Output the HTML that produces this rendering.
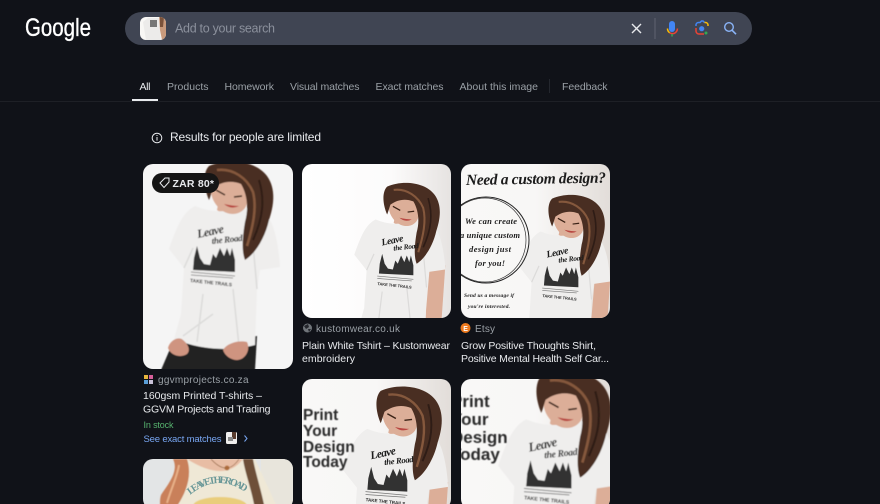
<!DOCTYPE html>
<html lang="en"><head><meta charset="utf-8"><title>Google Lens results</title>
<style>
html,body{margin:0;padding:0;background:#101218;width:880px;height:504px;overflow:hidden}
svg{display:block;font-family:"Liberation Sans",sans-serif}
.tab{font-size:10.5px;fill:#9aa0a6}
.src{font-size:10px;fill:#9aa0a6}
.ttl{font-size:10.5px;fill:#e8eaed}
.h{fill:#4a2f22}.s{fill:#efeeed}.k{fill:#dcae98}.g{fill:#333}.f{fill:none;stroke:#dcdbda;stroke-width:1.500}
.l{fill:none;stroke:#85583c;stroke-width:2.500}.d{fill:none;stroke:#2e1c14;stroke-width:2}
.sc{font-family:"Liberation Serif",serif;font-style:italic;font-weight:bold;fill:#1c1c1c}
.pr{font-weight:bold;fill:#2a2a2a}
</style></head><body>
<svg width="880" height="504" viewBox="0 0 880 504" xmlns="http://www.w3.org/2000/svg">
<defs>
<clipPath id="c1"><rect width="150" height="205" rx="10"/></clipPath>
<clipPath id="c2"><rect width="149" height="154" rx="10"/></clipPath>
<clipPath id="c4"><rect width="149" height="130" rx="10"/></clipPath>
<clipPath id="c6"><rect width="150" height="50" rx="10"/></clipPath>
<clipPath id="th"><rect width="26" height="23" rx="6"/></clipPath>
<linearGradient id="bg2" x1="0" x2="1" y1="0" y2="0"><stop offset="0" stop-color="#fff"/><stop offset=".6" stop-color="#fcfbfb"/><stop offset="1" stop-color="#e6e3e1"/></linearGradient>
<linearGradient id="bg3" x1="0" x2="1" y1="0" y2="0"><stop offset="0" stop-color="#f9f8f7"/><stop offset=".5" stop-color="#f8f7f6"/><stop offset="1" stop-color="#e2ddd9"/></linearGradient>
<filter id="b" x="-10%" y="-10%" width="120%" height="120%"><feGaussianBlur stdDeviation=".4"/></filter>
<path id="arc" d="M47 36 Q76 12 106 36"/>
</defs>
<rect width="880" height="504" fill="#101218"/>

<!-- logo -->
<text x="25" y="36" font-size="25" fill="#fff" stroke="#fff" stroke-width=".35" textLength="66" lengthAdjust="spacingAndGlyphs">Google</text>

<!-- search bar -->
<rect x="125" y="12" width="627" height="33" rx="16.5" fill="#404553"/>
<g transform="translate(140 17)"><g clip-path="url(#th)"><rect width="26" height="23" fill="#f8f7f5"/><path d="M3 5 L8 1 L19 1 L21 23 L6 23Z" fill="#ecebea"/><rect x="10" y="3" width="7" height="7" fill="#777"/><path d="M19 0h7v23h-4l-2-10z" fill="#c99a7c"/><path d="M20 0h4l-1 10h-3z" fill="#7b523a"/></g></g>
<text x="175" y="32.5" font-size="12.5" fill="#8b909c" textLength="100">Add to your search</text>
<path d="M632 24 L641 33 M641 24 L632 33" stroke="#e8eaed" stroke-width="1.4" fill="none"/>
<rect x="654.5" y="18" width="1" height="21" fill="#5f6470"/>
<!-- mic -->
<rect x="669" y="21" width="6" height="11" rx="3" fill="#4285f4"/>
<path d="M667.500 28.500 a5 5 0 0 0 2.200 4.200" stroke="#fbbc04" stroke-width="1.500" fill="none"/>
<path d="M669.700 32.700 a5 5 0 0 0 5.600 0 a5 5 0 0 0 2.100 -4.200" stroke="#ea4335" stroke-width="1.500" fill="none"/>
<rect x="671.300" y="34" width="1.500" height="2.500" fill="#34a853"/>
<!-- lens -->
<path d="M696 26 v-1 a2.500 2.500 0 0 1 2.500 -2.500 h1.500 l1.500 -1.500 h1.500 l1.500 1.500" stroke="#4285f4" stroke-width="1.500" fill="none"/>
<path d="M704.500 22.500 h1 a2.500 2.500 0 0 1 2.500 2.500 v1" stroke="#fbbc04" stroke-width="1.500" fill="none"/>
<path d="M696 28 v3 a3 3 0 0 0 3 3 h5" stroke="#ea4335" stroke-width="1.500" fill="none"/>
<circle cx="701.700" cy="28.700" r="2.600" fill="#4285f4"/>
<circle cx="706" cy="33" r="1.500" fill="#34a853"/>
<!-- search -->
<circle cx="729" cy="27" r="4.300" stroke="#8ab4f8" stroke-width="1.400" fill="none"/>
<path d="M732 30.200 L736 34.200" stroke="#8ab4f8" stroke-width="1.600"/>

<!-- tabs -->
<text x="139.500" y="90" class="tab" style="fill:#e8eaed" textLength="11">All</text>
<text x="167" y="90" class="tab" textLength="41.500">Products</text>
<text x="224.500" y="90" class="tab" textLength="49.500">Homework</text>
<text x="290" y="90" class="tab" textLength="69.500">Visual matches</text>
<text x="375.500" y="90" class="tab" textLength="68">Exact matches</text>
<text x="459.500" y="90" class="tab" textLength="78.500">About this image</text>
<rect x="549" y="79" width="1" height="14" fill="#24272e"/>
<text x="562" y="90" class="tab" textLength="45.500">Feedback</text>
<rect x="132" y="99" width="26" height="2" fill="#e8eaed"/>
<rect x="0" y="101" width="880" height="1" fill="#1e2026"/>

<!-- notice -->
<circle cx="157" cy="138" r="4.800" stroke="#e8eaed" stroke-width="1" fill="none"/>
<rect x="156.500" y="137" width="1" height="3.600" fill="#e8eaed"/><rect x="156.500" y="135" width="1" height="1" fill="#e8eaed"/>
<text x="170" y="141" font-size="12" fill="#e8eaed" textLength="151">Results for people are limited</text>

<!-- card 1 -->
<g transform="translate(143 164)"><g clip-path="url(#c1)">
<rect width="150" height="205" fill="#f5f5f5"/>
<g filter="url(#b)">
<path fill="#222" d="M18 206 L30 178 L114 172 L112 206Z"/>
<path class="k" d="M76 36 L100 40 L98 52 Q86 56 74 46Z"/>
<path class="s" d="M52 42 C40 48 34 62 26 85 L41 104 L38 150 L31 175 C60 187 90 187 112 181 L114 125 L117 106 L137 103 C136 85 132 60 124 52 L100 43 Q76 52 52 42Z"/>
<path class="f" d="M41 104 L50 84 M114 125 L110 80 M60 130 L54 178 M90 125 L96 182 M40 172 L70 150"/>
<path fill="#cf9480" d="M25 184 C27 176 36 172 40 176 C45 180 48 186 44 190 C38 194 28 192 25 184Z M80 186 C84 179 96 176 104 178 C108 186 102 196 94 196 C88 196 82 192 80 186Z"/>
<path class="k" d="M68 26 C70 14 82 10 94 14 C106 20 108 34 102 44 C96 52 84 52 76 44 C72 40 68 34 68 26Z"/>
<path d="M81 40 Q88 46 96 42 Q90 42 81 40Z" fill="#b8453f"/>
<path d="M73 26 L82 31 M91 33 L99 32" stroke="#3a2418" stroke-width="1.500" fill="none"/>
<path class="h" d="M66 2 C84 -6 112 -4 124 12 C134 26 130 44 126 56 C122 74 112 90 102 96 C98 86 100 70 102 58 C106 44 104 30 98 20 C88 16 78 18 70 24 C68 30 67 34 66 36 C60 22 60 8 66 2Z"/>
<path class="l" d="M74 6 C90 4 104 14 110 28 C114 44 110 62 104 82"/>
<path class="d" d="M116 16 C122 36 120 54 110 76"/>
<text x="55" y="74" class="sc" font-size="12" textLength="27" transform="rotate(-12 55 74)">Leave</text>
<text x="69" y="80" class="sc" font-size="9" textLength="31" transform="rotate(-6 69 80)">the Road</text>
<path class="g" d="M50 106 L51 94 L54 82 L57 94 L61 100 L67 101 L70 90 L73 94 L77 84 L81 92 L84 84 L87 92 L89 84 L92 96 L92 108Z"/>
<path d="M48 108 L92 112 M48 111 L90 114" stroke="#777" stroke-width=".8"/>
<text x="47" y="118" class="pr" font-size="4.800" textLength="42" transform="rotate(6 47 118)">TAKE THE TRAILS</text>
</g>
</g></g>
<rect x="152" y="173" width="67" height="20" rx="10" fill="#151515"/>
<path d="M160 183 L165 178 L169 178 L169 182 L164 187.500 Z" stroke="#e8eaed" stroke-width="1" fill="none"/>
<text x="172.500" y="187" font-size="10.500" font-weight="bold" fill="#e8eaed" textLength="41.500">ZAR 80*</text>

<rect x="144" y="375" width="4" height="4" fill="#e7b53c"/><rect x="149" y="375" width="4" height="4" fill="#d65f9a"/><rect x="144" y="380" width="4" height="4" fill="#5b9ed6"/><rect x="149" y="380" width="4" height="4" fill="#c9c2d8"/>
<text x="158" y="383" class="src" textLength="90.500">ggvmprojects.co.za</text>
<text x="143" y="399" class="ttl" textLength="119">160gsm Printed T-shirts –</text>
<text x="143" y="412.500" class="ttl" textLength="127.500">GGVM Projects and Trading</text>
<text x="143.500" y="428" font-size="9" fill="#57b36f" textLength="30">In stock</text>
<text x="143.500" y="442" font-size="9.500" fill="#78a6f2" textLength="78">See exact matches</text>
<rect x="226" y="432" width="11" height="12" rx="1.500" fill="#efeeed"/><rect x="232" y="432" width="4" height="7" fill="#5a3d2f"/><rect x="228" y="437" width="5" height="4" fill="#888"/>
<path d="M244.500 435.500 L247 438.500 L244.500 441.500" stroke="#78a6f2" stroke-width="1" fill="none"/>

<!-- card 2 -->
<g transform="translate(302 164)"><g clip-path="url(#c2)">
<rect width="149" height="154" fill="url(#bg2)"/>
<g filter="url(#b)" transform="translate(31 21) scale(.82)">
<path class="k" d="M76 36 L100 40 L98 52 Q86 56 74 46Z"/>
<path class="k" d="M118 100 L137 98 L132 170 L112 170Z"/>
<path class="s" d="M52 42 C40 48 34 62 26 85 L41 104 L38 150 L31 175 L31 210 L112 210 L114 125 L117 106 L137 103 C136 85 132 60 124 52 L100 43 Q76 52 52 42Z"/>
<path class="f" d="M41 104 L50 84 M114 125 L110 80 M60 130 L54 178 M90 125 L96 182"/>
<path class="k" d="M68 26 C70 14 82 10 94 14 C106 20 108 34 102 44 C96 52 84 52 76 44 C72 40 68 34 68 26Z"/>
<path d="M81 40 Q88 46 96 42 Q90 42 81 40Z" fill="#b8453f"/>
<path d="M73 26 L82 31 M91 33 L99 32" stroke="#3a2418" stroke-width="1.500" fill="none"/>
<path class="h" d="M66 2 C84 -6 112 -4 124 12 C134 26 130 44 126 56 C122 74 112 90 102 96 C98 86 100 70 102 58 C106 44 104 30 98 20 C88 16 78 18 70 24 C68 30 67 34 66 36 C60 22 60 8 66 2Z"/>
<path class="l" d="M74 6 C90 4 104 14 110 28 C114 44 110 62 104 82"/>
<path class="d" d="M116 16 C122 36 120 54 110 76"/>
<text x="60" y="74" class="sc" font-size="12" textLength="27" transform="rotate(-12 60 74)">Leave</text>
<text x="74" y="80" class="sc" font-size="9" textLength="31" transform="rotate(-6 74 80)">the Road</text>
<path class="g" d="M56 108 L57 96 L60 84 L63 96 L67 102 L73 103 L76 92 L79 96 L83 86 L87 94 L90 86 L93 94 L95 86 L98 98 L98 110Z"/>
<path d="M54 111 L98 115 M54 114 L96 117" stroke="#777" stroke-width=".8"/>
<text x="54" y="122" class="pr" font-size="4.800" textLength="42" transform="rotate(6 54 122)">TAKE THE TRAILS</text>
</g>
</g></g>
<circle cx="307.500" cy="328" r="4.500" fill="#70757a"/><path d="M304 326 L308 324 L309 327 L306 329Z M308 329 L311 329 L309 332Z" fill="#24262c"/>
<text x="316" y="332" class="src" textLength="84">kustomwear.co.uk</text>
<text x="302" y="349" class="ttl" textLength="148">Plain White Tshirt – Kustomwear</text>
<text x="302" y="362" class="ttl" textLength="53">embroidery</text>

<!-- card 3 -->
<g transform="translate(461 164)"><g clip-path="url(#c2)">
<rect width="149" height="154" fill="url(#bg3)"/>
<g filter="url(#b)" transform="translate(37 33) scale(.82)">
<path class="k" d="M76 36 L100 40 L98 52 Q86 56 74 46Z"/>
<path class="k" d="M118 100 L137 98 L132 170 L112 170Z"/>
<path class="s" d="M52 42 C40 48 34 62 26 85 L41 104 L38 150 L31 175 L31 210 L112 210 L114 125 L117 106 L137 103 C136 85 132 60 124 52 L100 43 Q76 52 52 42Z"/>
<path class="f" d="M41 104 L50 84 M114 125 L110 80"/>
<path class="k" d="M68 26 C70 14 82 10 94 14 C106 20 108 34 102 44 C96 52 84 52 76 44 C72 40 68 34 68 26Z"/>
<path d="M81 40 Q88 46 96 42 Q90 42 81 40Z" fill="#b8453f"/>
<path d="M73 26 L82 31 M91 33 L99 32" stroke="#3a2418" stroke-width="1.500" fill="none"/>
<path class="h" d="M66 2 C84 -6 112 -4 124 12 C134 26 130 44 126 56 C122 74 112 90 102 96 C98 86 100 70 102 58 C106 44 104 30 98 20 C88 16 78 18 70 24 C68 30 67 34 66 36 C60 22 60 8 66 2Z"/>
<path class="l" d="M74 6 C90 4 104 14 110 28 C114 44 110 62 104 82"/>
<path class="d" d="M116 16 C122 36 120 54 110 76"/>
<text x="60" y="74" class="sc" font-size="12" textLength="27" transform="rotate(-12 60 74)">Leave</text>
<text x="74" y="80" class="sc" font-size="9" textLength="31" transform="rotate(-6 74 80)">the Road</text>
<path class="g" d="M56 108 L57 96 L60 84 L63 96 L67 102 L73 103 L76 92 L79 96 L83 86 L87 94 L90 86 L93 94 L95 86 L98 98 L98 110Z"/>
<path d="M54 111 L98 115 M54 114 L96 117" stroke="#777" stroke-width=".8"/>
<text x="54" y="122" class="pr" font-size="4.800" textLength="42" transform="rotate(6 54 122)">TAKE THE TRAILS</text>
</g>
<text x="5" y="21" class="sc" font-size="15.500" textLength="140" transform="rotate(-1 5 21)">Need a custom design?</text>
<circle cx="25" cy="76" r="43" stroke="#222" stroke-width="1" fill="none"/>
<ellipse cx="24" cy="76" rx="41" ry="42" stroke="#333" stroke-width=".7" fill="none"/>
<text x="4" y="60" class="sc" font-size="8.500" textLength="52">We can create</text>
<text x="-1" y="74" class="sc" font-size="8.500" textLength="60">a unique custom</text>
<text x="8" y="88" class="sc" font-size="8.500" textLength="42">design just</text>
<text x="14" y="102" class="sc" font-size="8.500" textLength="30">for you!</text>
<text x="3" y="133" class="sc" font-size="5.500" textLength="50">Send us a message if</text>
<text x="7" y="144" class="sc" font-size="5.500" textLength="42">you're interested.</text>
</g></g>
<circle cx="465.500" cy="328" r="5" fill="#ee7a1e"/><text x="463.200" y="331" font-size="7" font-weight="bold" fill="#fff">E</text>
<text x="475" y="332" class="src" textLength="20">Etsy</text>
<text x="461" y="349" class="ttl" textLength="135">Grow Positive Thoughts Shirt,</text>
<text x="461" y="362" class="ttl" textLength="148">Positive Mental Health Self Car...</text>

<!-- card 4 -->
<g transform="translate(302 379)"><g clip-path="url(#c4)">
<rect width="149" height="130" fill="url(#bg3)"/>
<g filter="url(#b)" transform="translate(16 10) scale(.95)">
<path class="k" d="M76 36 L100 40 L98 52 Q86 56 74 46Z"/>
<path class="k" d="M118 100 L137 98 L132 170 L112 170Z"/>
<path class="s" d="M52 42 C40 48 34 62 26 85 L41 104 L38 150 L31 175 L31 210 L112 210 L114 125 L117 106 L137 103 C136 85 132 60 124 52 L100 43 Q76 52 52 42Z"/>
<path class="k" d="M68 26 C70 14 82 10 94 14 C106 20 108 34 102 44 C96 52 84 52 76 44 C72 40 68 34 68 26Z"/>
<path d="M81 40 Q88 46 96 42 Q90 42 81 40Z" fill="#b8453f"/>
<path d="M73 26 L82 31 M91 33 L99 32" stroke="#3a2418" stroke-width="1.500" fill="none"/>
<path class="h" d="M66 2 C84 -6 112 -4 124 12 C134 26 130 44 126 56 C122 74 112 90 102 96 C98 86 100 70 102 58 C106 44 104 30 98 20 C88 16 78 18 70 24 C68 30 67 34 66 36 C60 22 60 8 66 2Z"/>
<path class="l" d="M74 6 C90 4 104 14 110 28 C114 44 110 62 104 82"/>
<path class="d" d="M116 16 C122 36 120 54 110 76"/>
<text x="56" y="74" class="sc" font-size="12" textLength="27" transform="rotate(-12 56 74)">Leave</text>
<text x="70" y="80" class="sc" font-size="9" textLength="31" transform="rotate(-6 70 80)">the Road</text>
<path class="g" d="M52 106 L53 94 L56 82 L59 94 L63 100 L69 101 L72 90 L75 94 L79 84 L83 92 L86 84 L89 92 L91 84 L94 96 L94 108Z"/>
<path d="M50 108 L94 112 M50 111 L92 114" stroke="#777" stroke-width=".8"/>
<text x="50" y="118" class="pr" font-size="4.800" textLength="42" transform="rotate(6 50 118)">TAKE THE TRAILS</text>
</g>
<text x="1" y="41" class="pr" font-size="15.500" filter="url(#b)">Print</text>
<text x="1" y="57" class="pr" font-size="15.500" filter="url(#b)">Your</text>
<text x="1" y="73" class="pr" font-size="15.500" filter="url(#b)">Design</text>
<text x="1" y="88" class="pr" font-size="15.500" filter="url(#b)">Today</text>
</g></g>

<!-- card 5 -->
<g transform="translate(461 379)"><g clip-path="url(#c4)">
<rect width="149" height="130" fill="url(#bg3)"/>
<g filter="url(#b)" transform="translate(9 -5) scale(1.080)">
<path class="k" d="M76 36 L100 40 L98 52 Q86 56 74 46Z"/>
<path class="k" d="M118 100 L137 98 L132 170 L112 170Z"/>
<path class="s" d="M52 42 C40 48 34 62 26 85 L41 104 L38 150 L31 175 L31 210 L112 210 L114 125 L117 106 L137 103 C136 85 132 60 124 52 L100 43 Q76 52 52 42Z"/>
<path class="k" d="M68 26 C70 14 82 10 94 14 C106 20 108 34 102 44 C96 52 84 52 76 44 C72 40 68 34 68 26Z"/>
<path d="M81 40 Q88 46 96 42 Q90 42 81 40Z" fill="#b8453f"/>
<path d="M73 26 L82 31 M91 33 L99 32" stroke="#3a2418" stroke-width="1.500" fill="none"/>
<path class="h" d="M66 2 C84 -6 112 -4 124 12 C134 26 130 44 126 56 C122 74 112 90 102 96 C98 86 100 70 102 58 C106 44 104 30 98 20 C88 16 78 18 70 24 C68 30 67 34 66 36 C60 22 60 8 66 2Z"/>
<path class="l" d="M74 6 C90 4 104 14 110 28 C114 44 110 62 104 82"/>
<path class="d" d="M116 16 C122 36 120 54 110 76"/>
<text x="55" y="72" class="sc" font-size="12" textLength="27" transform="rotate(-12 55 72)">Leave</text>
<text x="69" y="78" class="sc" font-size="9" textLength="31" transform="rotate(-6 69 78)">the Road</text>
<path class="g" d="M52 104 L53 92 L56 80 L59 92 L63 98 L69 99 L72 88 L75 92 L79 82 L83 90 L86 82 L89 90 L91 82 L94 94 L94 106Z"/>
<path d="M50 106 L94 110 M50 109 L92 112" stroke="#777" stroke-width=".8"/>
<text x="50" y="116" class="pr" font-size="4.800" textLength="42" transform="rotate(6 50 116)">TAKE THE TRAILS</text>
</g>
<text x="-10" y="28" class="pr" font-size="17" filter="url(#b)">Print</text>
<text x="-10" y="46" class="pr" font-size="17" filter="url(#b)">Your</text>
<text x="-10" y="64" class="pr" font-size="17" filter="url(#b)">Design</text>
<text x="-10" y="81" class="pr" font-size="17" filter="url(#b)">Today</text>
</g></g>

<!-- card 6 -->
<g transform="translate(143 459)"><g clip-path="url(#c6)">
<rect width="150" height="50" fill="#e3e5e6"/>
<rect x="118" y="0" width="32" height="50" fill="#e8e5dc"/>
<g filter="url(#b)">
<path d="M42 0 H112 L135 50 H24Z" fill="#efe8d6"/>
<path d="M44 0 Q82 24 100 0Z" fill="#e8bda4"/>
<path d="M30 0 C36 12 26 24 18 36 C16 42 18 48 16 50 H32 C42 36 50 18 44 0Z" fill="#c9805a"/>
<path d="M36 6 C34 18 28 30 24 44" stroke="#e8b088" stroke-width="2" fill="none"/>
<path d="M100 0 C102 14 108 28 112 50 H122 C118 30 112 12 110 0Z" fill="#6e5038"/>
<circle cx="84" cy="9" r="2.500" fill="#b5713f"/>
<path d="M68 0 Q84 18 96 0" stroke="#8a5a34" stroke-width=".6" fill="none"/>
<ellipse cx="77" cy="47" rx="27" ry="9" fill="#e9cd7c"/>
</g>
<text font-family="Liberation Serif" font-weight="bold" font-size="10" fill="#6a9898" textLength="60"><textPath href="#arc">LEAVE THE ROAD</textPath></text>
</g></g>
</svg>
</body></html>
